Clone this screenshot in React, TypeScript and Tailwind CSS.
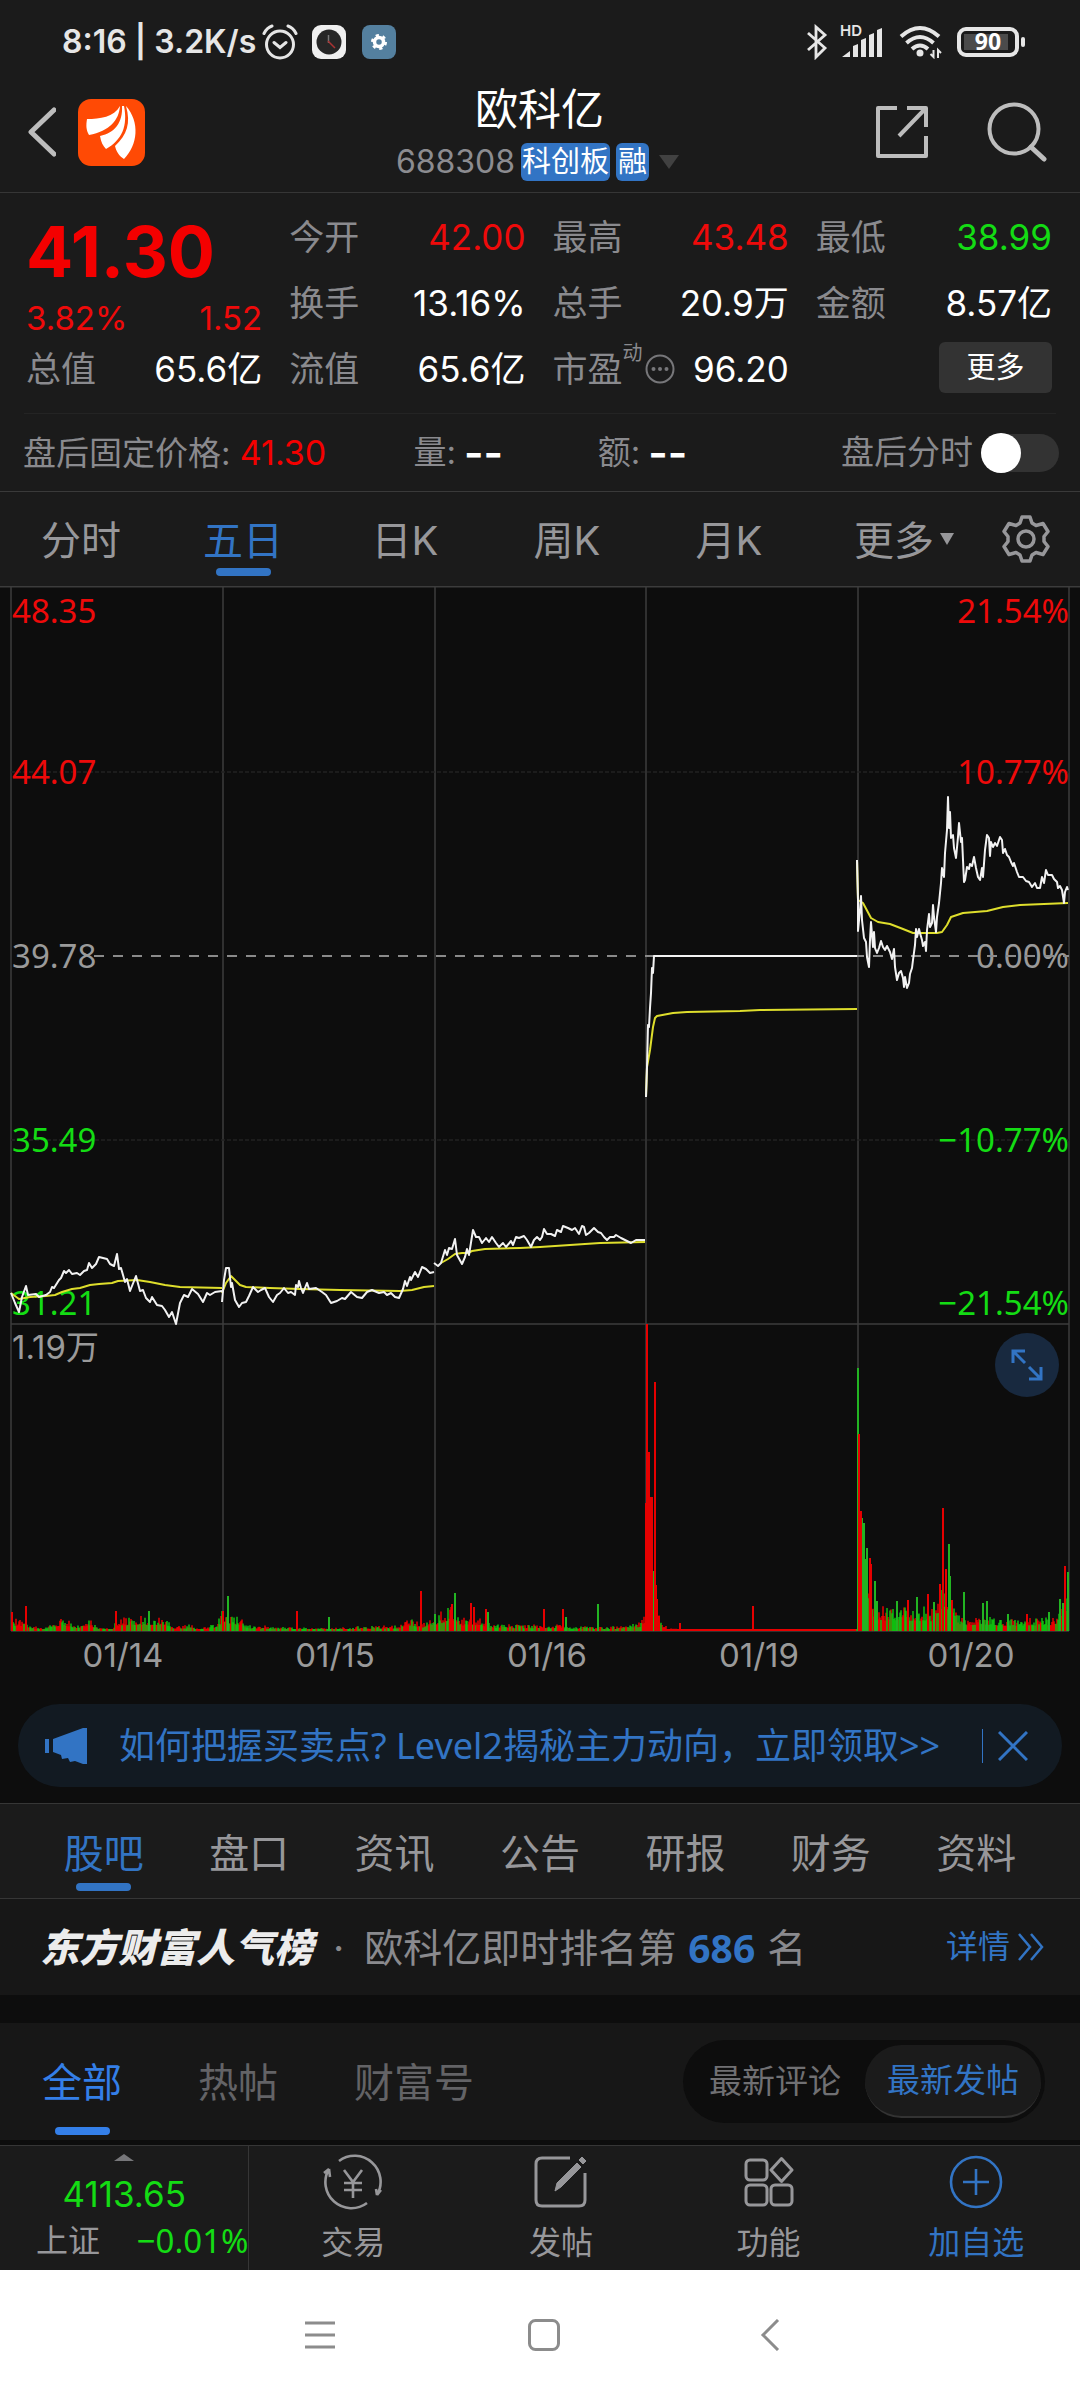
import React, { useState } from 'react';

type Point = [number, number];

interface QuoteCell {
  label: string;
  value: string;
  color?: string;
}

interface VolumeSpike {
  x: number;
  h: number;
  up: boolean;
}

const openColumn: QuoteCell[] = [
  { label: '今开', value: '42.00', color: 'text-[#ee0a0a]' },
  { label: '换手', value: '13.16%' },
  { label: '流值', value: '65.6亿' },
];

const periodTabs = ['分时', '五日', '日K', '周K', '月K'];
const infoTabs = ['股吧', '盘口', '资讯', '公告', '研报', '财务', '资料'];
const postTabs = ['全部', '热帖', '财富号'];

/* ---------- chart data ---------- */

const PRICE_LINES = [
  '11,707 15,717 19,726 22,711 26,700 28,709 36,708 39,711 46,709 50,706 52,701 54,702 59,694 61,692 64,685 66,687 69,684 72,688 77,687 80,689 84,685 87,684 89,677 92,682 96,678 99,671 103,672 107,673 110,678 114,680 117,668 119,683 121,682 125,696 127,693 130,705 136,690 140,705 143,704 146,712 150,716 152,711 157,719 162,720 165,724 169,731 172,726 176,738 180,717 184,709 188,711 192,703 198,708 203,716 207,707 210,709 215,706 222,705',
  '222,716 224,694 226,682 229,682 231,701 232,697 235,714 239,721 242,717 246,716 249,710 253,701 258,706 261,704 265,702 269,711 273,716 277,709 280,707 284,702 288,707 291,706 295,709 296,699 298,701 299,695 301,702 303,707 307,697 309,703 316,702 322,706 326,709 331,717 337,715 342,712 345,713 351,706 357,711 362,712 367,706 372,704 379,707 384,706 387,709 391,707 395,711 399,712 403,703 405,695 407,700 410,691 411,694 415,686 418,691 422,681 426,683 430,687 434,686',
  '434,677 438,680 441,677 445,664 447,669 449,662 452,663 455,653 457,669 462,678 465,671 467,663 469,669 473,644 476,651 479,651 482,657 486,652 489,656 492,651 496,657 499,661 503,657 506,661 511,655 513,659 516,651 519,652 524,650 527,654 531,661 534,654 537,651 540,654 542,651 544,643 547,648 551,648 555,650 557,644 561,646 563,640 568,642 572,644 575,642 579,648 582,640 584,641 586,649 589,647 594,642 598,646 601,647 604,651 607,654 610,651 614,651 616,649 621,652 625,654 631,657 636,654 645,654',
  '646,511 647,481 648,439 649,441 650,422 651,407 652,382 653,387 654,370 857,370',
  '857,274 858,314 858,345 860,324 861,310 862,334 864,352 866,356 867,371 869,381 870,354 871,336 873,361 874,346 875,362 877,367 879,362 881,355 883,361 885,364 887,360 890,366 892,373 894,363 895,381 897,394 899,387 901,385 903,392 904,401 905,391 907,402 909,397 910,388 912,382 913,374 915,359 916,343 917,351 919,343 920,347 922,354 923,360 925,356 926,365 927,344 929,328 930,341 932,337 933,319 934,331 936,346 937,331 939,317 940,307 941,297 942,282 944,291 945,267 947,244 948,211 949,242 950,226 951,252 953,249 954,262 956,272 958,251 959,237 961,256 962,252 964,296 965,294 967,281 969,283 970,278 972,280 974,271 976,282 978,291 980,294 982,282 983,291 985,264 987,249 989,252 990,270 991,256 993,261 995,257 997,260 1000,251 1002,254 1003,267 1005,263 1007,269 1009,271 1011,276 1013,280 1014,277 1017,286 1019,291 1023,291 1026,295 1029,296 1032,301 1035,297 1037,302 1040,302 1042,291 1044,297 1046,284 1048,289 1052,289 1054,293 1057,296 1058,302 1060,300 1062,304 1064,317 1065,306 1067,301 1068,304',
];

const AVERAGE_LINES = [
  '11,707 19,713 30,711 46,710 55,709 62,706 72,703 80,702 90,699 99,698 112,697 118,695 137,694 150,696 165,699 180,701 222,702',
  '222,707 226,697 231,690 235,694 240,699 246,701 270,702 300,703 340,704 400,705 412,704 424,701 434,700',
  '441,677 448,673 455,668 462,667 468,667 472,665 485,663 520,662 540,661 555,660 570,659 600,657 645,656',
  '646,511 647,481 650,464 653,441 655,432 657,430 673,427 687,426 740,425 760,424 857,423',
  '857,274 858,314 863,317 871,332 878,336 890,338 903,343 913,347 937,347 942,346 947,339 951,331 963,327 987,325 1003,321 1020,319 1068,317',
];

// Upper bound of the ordinary bars along the x axis
const VOLUME_PROFILE: Point[] = [
  [11, 14], [24, 10], [32, 6], [44, 2], [50, 10], [65, 13], [76, 7], [90, 13], [98, 4], [113, 2],
  [116, 12], [130, 15], [150, 15], [167, 14], [173, 5], [190, 7], [200, 2], [215, 8], [222, 20],
  [238, 16], [248, 6], [280, 5], [320, 3], [360, 5], [400, 6], [410, 14], [424, 8], [436, 16],
  [450, 26], [462, 14], [480, 14], [492, 7], [560, 7], [570, 5], [620, 5], [640, 10], [646, 20],
  [655, 30], [662, 9], [668, 4], [690, 2], [857, 2], [859, 110], [864, 70], [871, 45], [877, 26],
  [900, 26], [935, 24], [941, 50], [949, 50], [955, 20], [965, 14], [985, 16], [1000, 12],
  [1030, 14], [1054, 14], [1062, 26], [1069, 50],
];

const VOLUME_SPIKES: VolumeSpike[] = [
  { x: 12, h: 19, up: true }, { x: 26, h: 25, up: true }, { x: 116, h: 20, up: true },
  { x: 149, h: 20, up: false }, { x: 223, h: 20, up: true }, { x: 228, h: 35, up: false },
  { x: 297, h: 20, up: true }, { x: 329, h: 14, up: false }, { x: 421, h: 40, up: true },
  { x: 435, h: 17, up: false }, { x: 452, h: 27, up: true }, { x: 455, h: 38, up: false },
  { x: 471, h: 28, up: true }, { x: 474, h: 24, up: true }, { x: 486, h: 22, up: true },
  { x: 488, h: 19, up: false }, { x: 544, h: 22, up: true }, { x: 563, h: 22, up: true },
  { x: 566, h: 14, up: false }, { x: 598, h: 27, up: false }, { x: 646, h: 128, up: true },
  { x: 647, h: 307, up: true }, { x: 649, h: 179, up: true }, { x: 650, h: 134, up: true },
  { x: 652, h: 134, up: true }, { x: 653, h: 60, up: false }, { x: 655, h: 249, up: true },
  { x: 656, h: 46, up: true }, { x: 657, h: 32, up: true }, { x: 659, h: 15, up: true },
  { x: 680, h: 8, up: true }, { x: 753, h: 25, up: true }, { x: 858, h: 263, up: false },
  { x: 859, h: 197, up: true }, { x: 861, h: 120, up: true }, { x: 862, h: 113, up: false },
  { x: 864, h: 108, up: false }, { x: 865, h: 72, up: false }, { x: 867, h: 83, up: false },
  { x: 870, h: 73, up: true }, { x: 871, h: 67, up: true }, { x: 875, h: 50, up: false },
  { x: 877, h: 30, up: false }, { x: 897, h: 30, up: false }, { x: 908, h: 31, up: true },
  { x: 917, h: 34, up: false }, { x: 928, h: 37, up: true }, { x: 934, h: 29, up: false },
  { x: 940, h: 47, up: true }, { x: 943, h: 123, up: true }, { x: 946, h: 62, up: true },
  { x: 949, h: 87, up: false }, { x: 950, h: 55, up: false }, { x: 952, h: 31, up: true },
  { x: 964, h: 39, up: false }, { x: 983, h: 28, up: false }, { x: 987, h: 30, up: false },
  { x: 1008, h: 17, up: false }, { x: 1027, h: 17, up: true }, { x: 1049, h: 19, up: false },
  { x: 1060, h: 32, up: false }, { x: 1063, h: 28, up: false }, { x: 1065, h: 65, up: true },
  { x: 1068, h: 59, up: false },
];

const GRID_X = [11, 223, 435, 646, 858, 1069];
const BASE_Y = 1045;
const DATES = ['01/14', '01/15', '01/16', '01/19', '01/20'];

const profileAt = (x: number) => {
  for (let i = 1; i < VOLUME_PROFILE.length; i++) {
    const [x0, h0] = VOLUME_PROFILE[i - 1];
    const [x1, h1] = VOLUME_PROFILE[i];
    if (x <= x1) {
      return h0 + ((h1 - h0) * (x - x0)) / (x1 - x0);
    }
  }
  return 2;
};

// Repeatable noise so that the bars don't jump on re-render
const noise = (n: number) => {
  const s = Math.sin(n * 127.1 + 11.7) * 43758.5453;
  return s - Math.floor(s);
};

const volumePath = (up: boolean) => {
  let d = '';
  for (let i = 0; i < 1057; i++) {
    const x = 12 + i;
    const quiet = x > 662 && x < 857;
    const isUp = quiet || noise(i + 500) > 0.48;
    if (isUp !== up) continue;
    const r = noise(i);
    const h = Math.max(2, profileAt(x) * (0.4 + 0.6 * r * r));
    d += `M${x} ${BASE_Y}v${-h.toFixed(1)}`;
  }
  return d;
};

const spikePath = (up: boolean) =>
  VOLUME_SPIKES.filter(s => s.up === up).map(s => `M${s.x} ${BASE_Y}v${-s.h}`).join('');

/* ---------- sections ---------- */

const StatusBar = () => (
  <div className="flex h-[84px] items-center justify-between pl-[62px] pr-[54px] text-[#e6e6e6]">
    <div className="flex items-center">
      <span className="whitespace-nowrap text-[32px] font-semibold">8:16 | 3.2K/s</span>
      <svg className="ml-[6px] h-9 w-9" viewBox="0 0 36 36" fill="none" stroke="currentColor" strokeWidth="3">
        <circle cx="18" cy="20.500" r="13.500" />
        <path d="M12 18.500l6 5 6-5M2 9.500q3-6 8-7.500M34 9.500q-3-6-8-7.500" strokeLinecap="round" />
      </svg>
      <svg className="ml-[14px] h-[34px] w-[34px]" viewBox="0 0 34 34">
        <rect width="34" height="34" rx="9" fill="#efefef" />
        <circle cx="17" cy="17" r="12.500" fill="#262626" />
        <path d="M16.500 10v8" stroke="#777" strokeWidth="1.500" />
        <path d="M16 16l7 7" stroke="#a33" strokeWidth="1.500" />
      </svg>
      <svg className="ml-4 h-[34px] w-[34px]" viewBox="0 0 34 34">
        <rect width="34" height="34" rx="8" fill="#54809f" />
        <circle cx="17" cy="17" r="4.500" fill="none" stroke="#fff" strokeWidth="3.500" />
        <circle cx="17" cy="17" r="6.700" fill="none" stroke="#fff" strokeWidth="2.600" strokeDasharray="3.200 3.814" />
      </svg>
    </div>
    <div className="flex items-center">
      <svg className="h-9 w-[22px]" viewBox="0 0 22 36" fill="none" stroke="currentColor" strokeWidth="2.800">
        <path d="M2 9l17 15-9 9V3l9 8L2 26" />
      </svg>
      <svg className="ml-3 h-10 w-[43px]" viewBox="0 -4 43 40" fill="currentColor">
        <text x="0" y="10" fontSize="15" fontWeight="600">HD</text>
        <path d="M2 31l8-6v6zM13 20l5-2v13h-5zM21 14l5-2v19h-5zM29 9l5-2v24h-5zM37 4l5-2v29h-5z" />
      </svg>
      <svg className="ml-4 h-[34px] w-[44px]" viewBox="0 0 44 34" fill="none" stroke="currentColor" strokeWidth="4">
        <path d="M2 11.500q19-17 38 0M7.500 18q13.500-12 27 0M13 24q8-7 16 0" />
        <circle cx="21" cy="28" r="3.500" fill="currentColor" stroke="none" />
        <path d="M34.500 25v7l-3-3M39 33v-8l3 3" strokeWidth="2" />
      </svg>
      <svg className="ml-[14px] h-[30px] w-[69px] font-['Noto_Sans',sans-serif]" viewBox="0 0 69 30">
        <rect x="2" y="2" width="58" height="26" rx="7" fill="none" stroke="currentColor" strokeWidth="4" />
        <rect x="7" y="7" width="44" height="16" fill="#4b4b4b" />
        <rect x="64" y="10" width="4" height="10" rx="2" fill="currentColor" />
        <text x="31" y="23" fontSize="23" fontWeight="700" textAnchor="middle" fill="#fff">90</text>
      </svg>
    </div>
  </div>
);

const TitleBar = () => (
  <div className="flex h-24 items-center px-7">
    <div className="flex flex-1 items-center gap-[22px]">
      <button type="button" aria-label="返回">
        <svg className="h-[50px] w-7" viewBox="0 0 28 50" fill="none" stroke="#bdbdbd" strokeWidth="5">
          <path d="M26 3L3 25l23 22" strokeLinecap="round" strokeLinejoin="round" />
        </svg>
      </button>
      <svg className="h-[67px] w-[67px]" viewBox="0 0 67 67">
        <rect width="67" height="67" rx="13" fill="#ff4a05" />
        <g fill="#fff">
          <path d="M9 20C22 20 36 18 42 7C41 21 32 32 11 36C8 31 8 26 9 20z" />
          <path d="M44 7C45 23 37 34 22 37C23 43 25 47 28 50C44 41 50 27 46 7z" />
          <path d="M48 7C53 24 49 36 37 47C38 52 41 57 46 60C60 46 62 23 48 7z" />
        </g>
      </svg>
    </div>
    <div className="flex flex-col items-center">
      <h1 className="h-[50px] pl-1 text-[43px] leading-[50px] text-white">欧科亿</h1>
      <button type="button" className="mt-[9px] flex h-[38px] items-center">
        <span className="mr-[6px] text-[32px] text-[#8c8c90]">688308</span>
        <span className="mr-[6px] rounded-md bg-[#3274c4] px-px text-[29px] leading-[38px] text-white">科创板</span>
        <span className="rounded-md bg-[#3274c4] px-[2px] text-[29px] leading-[38px] text-white">融</span>
        <svg className="ml-[10px] h-[14px] w-5" viewBox="0 0 20 14" fill="#414141"><path d="M0 0h20L10 14z" /></svg>
      </button>
    </div>
    <div className="flex flex-1 items-center justify-end gap-[58px] pr-[5px]">
      <button type="button" aria-label="分享">
        <svg className="h-[54px] w-[54px]" viewBox="0 0 54 54" fill="none" stroke="#bdbdbd" strokeWidth="4">
          <path d="M22 3H3v48h48V31M32 3h19v19M50 4L24 31" strokeLinejoin="round" />
        </svg>
      </button>
      <button type="button" aria-label="搜索">
        <svg className="h-[60px] w-[60px]" viewBox="0 0 60 60" fill="none" stroke="#bdbdbd" strokeWidth="4">
          <circle cx="27" cy="27" r="24.500" />
          <path d="M44 45l13 12" strokeWidth="5" strokeLinecap="round" />
        </svg>
      </button>
    </div>
  </div>
);

const Cell = ({ label, value, color = 'text-white' }: QuoteCell) => (
  <div className="flex h-[66px] items-center justify-between whitespace-nowrap">
    <dt className="text-[35px] text-[#8a8a8e]">{label}</dt>
    <dd className={`text-[35px] ${color}`}>{value}</dd>
  </div>
);

const QuotePanel = () => (
  <dl className="grid grid-cols-4 gap-x-[27px] py-[11px] pl-[26px] pr-[28px]">
    <div>
      <div className="flex h-24 items-center text-[70px] font-bold text-[#f40000]">41.30</div>
      <div className="flex h-9 items-center justify-between text-[33px] text-[#ee0a0a]">
        <span>3.82%</span>
        <span>1.52</span>
      </div>
      <Cell label="总值" value="65.6亿" />
    </div>
    <div>
      {openColumn.map(cell => <Cell key={cell.label} {...cell} />)}
    </div>
    <div>
      <Cell label="最高" value="43.48" color="text-[#ee0a0a]" />
      <Cell label="总手" value="20.9万" />
      <div className="flex h-[66px] items-center justify-between whitespace-nowrap text-[35px]">
        <dt className="flex items-center text-[#8a8a8e]">
          市盈
          <span className="mb-8 text-[20px] leading-[20px]">动</span>
          <svg className="ml-[2px] h-[30px] w-[30px]" viewBox="0 0 30 30" fill="#77777a">
            <circle cx="15" cy="15" r="13.500" fill="none" stroke="#77777a" strokeWidth="2" />
            <circle cx="8.500" cy="15" r="2" /><circle cx="15" cy="15" r="2" /><circle cx="21.500" cy="15" r="2" />
          </svg>
        </dt>
        <dd className="text-white">96.20</dd>
      </div>
    </div>
    <div>
      <Cell label="最低" value="38.99" color="text-[#14dc14]" />
      <Cell label="金额" value="8.57亿" />
      <div className="flex h-[66px] items-center justify-end">
        <button type="button" className="mb-1 h-[51px] w-[113px] rounded-md bg-[#333333] text-[29px] text-white">更多</button>
      </div>
    </div>
  </dl>
);

const AfterHours = () => {
  const [enabled, setEnabled] = useState(false);

  return (
    <div className="border-b border-[#3a3a3a]">
      <div className="mx-6 border-t border-[#242424]" />
      <div className="grid h-[77px] grid-cols-[390fr_184fr_243fr_217fr] items-center whitespace-nowrap pl-[23px] pr-[21px] text-[33px] text-[#8a8a8e]">
        <div>盘后固定价格: <span className="text-[34px] text-[#f40000]">41.30</span></div>
        <div className="flex items-center gap-2">量: <span className="text-[42px] font-semibold text-white">--</span></div>
        <div className="flex items-center gap-2">额: <span className="text-[42px] font-semibold text-white">--</span></div>
        <label className="flex items-center justify-end gap-2">
          盘后分时
          <input
            type="checkbox"
            role="switch"
            checked={enabled}
            onChange={e => setEnabled(e.target.checked)}
            className="flex h-[38px] w-[78px] appearance-none items-center rounded-full bg-[#333333] before:h-10 before:w-10 before:shrink-0 before:rounded-full before:bg-white checked:justify-end checked:bg-[#3274c4]"
          />
        </label>
      </div>
    </div>
  );
};

const PeriodTabs = () => {
  const [active, setActive] = useState('五日');

  return (
    <nav className="grid h-[94px] grid-cols-[repeat(6,3fr)_2fr] text-[40px] text-[#97979a]">
      {periodTabs.map(tab => (
        <button
          key={tab}
          type="button"
          onClick={() => setActive(tab)}
          className={`flex flex-col items-center pt-[21px] ${active === tab ? 'text-[#3274c4]' : ''}`}
        >
          <span className="leading-[55px]">{tab}</span>
          {active === tab && <span className="h-2 w-[55px] rounded-full bg-[#3274c4]" />}
        </button>
      ))}
      <button type="button" className="flex items-start justify-end gap-[6px] pr-[18px] pt-[21px]">
        <span className="leading-[55px]">更多</span>
        <svg className="mt-5 h-3 w-[14px]" viewBox="0 0 14 12" fill="#97979a"><path d="M0 0h14L7 12z" /></svg>
      </button>
      <button type="button" aria-label="设置" className="flex items-center justify-center">
        <svg className="h-12 w-12" viewBox="0 0 48 48" fill="none" stroke="#97979a" strokeWidth="3.500" strokeLinejoin="round">
          <path d="M20 2h8l2 6 4 2.500 7-2 5 8-4 5v5l4 5-5 8-7-2-4 2.500-2 6h-8l-2-6-4-2.500-7 2-5-8 4-5v-5l-4-5 5-8 7 2 4-2.500z" />
          <circle cx="24" cy="24" r="8" />
        </svg>
      </button>
    </nav>
  );
};

const FiveDayChart = () => (
  <div className="relative">
    <svg
      className="block h-auto w-full font-['Noto_Sans','Noto_Sans_CJK_SC',sans-serif]"
      viewBox="0 0 1080 1096"
      fontSize="33"
    >
      {/* Grid */}
      <g stroke="#3c3c3c" strokeWidth="1.500">
        <path d="M0 .75h1080M11 738h1058M11 1045h1058" />
        {GRID_X.map(x => <path key={x} d={`M${x} 0V1045`} />)}
      </g>
      <path d="M11 186h1058M11 554h1058" stroke="#222" strokeWidth="1.500" strokeDasharray="4 2" />

      {/* Scales */}
      <g fill="#ee0a0a">
        <text x="12" y="37">48.35</text>
        <text x="12" y="198">44.07</text>
        <text x="1069" y="37" textAnchor="end">21.54%</text>
        <text x="1069" y="198" textAnchor="end">10.77%</text>
      </g>
      <g fill="#14dc14">
        <text x="12" y="566">35.49</text>
        <text x="12" y="729">31.21</text>
        <text x="1069" y="566" textAnchor="end">−10.77%</text>
        <text x="1069" y="729" textAnchor="end">−21.54%</text>
      </g>
      <g fill="#9a9a9a">
        <text x="12" y="382">39.78</text>
        <text x="1069" y="382" textAnchor="end">0.00%</text>
      </g>
      <g className="font-['Inter','Noto_Sans_CJK_SC',sans-serif]" fill="#9a9a9a">
        <text x="12" y="773">1.19万</text>
        {DATES.map((date, i) => (
          <text key={date} x={123 + i * 212} y="1081" textAnchor="middle">{date}</text>
        ))}
      </g>

      <path d="M94 370H1069" stroke="#8a8a8a" strokeWidth="2" strokeDasharray="10 9" />

      {/* Volume */}
      <g strokeWidth="1.500" fill="none">
        <path d={volumePath(true)} stroke="#e60000" />
        <path d={volumePath(false)} stroke="#10d010" strokeOpacity=".9" />
        <path d={spikePath(false)} stroke="#22b422" strokeWidth="2" />
        <path d={spikePath(true)} stroke="#e60000" strokeWidth="2" />
      </g>

      {/* Average and price */}
      <g fill="none" strokeWidth="2" strokeLinejoin="round">
        {AVERAGE_LINES.map((points, i) => <polyline key={i} points={points} stroke="#dede2c" />)}
        {PRICE_LINES.map((points, i) => <polyline key={i} points={points} stroke="#f2f2f2" />)}
      </g>
    </svg>
    <button
      type="button"
      aria-label="全屏"
      className="absolute right-[21px] top-[68.200%] flex h-16 w-16 items-center justify-center rounded-full bg-[#18293f]"
    >
      <svg className="h-8 w-8" viewBox="0 0 32 32" fill="none" stroke="#3274c4" strokeWidth="3">
        <path d="M14 2H2v12M2 2l12 12M30 18v12H18M30 30L18 18" />
      </svg>
    </button>
  </div>
);

const PromoBar = () => (
  <div className="mx-[18px] mb-4 mt-[22px] flex h-[83px] items-center rounded-full bg-[#121a22] pl-[27px] pr-[34px] text-[#3274c4]">
    <svg className="h-9 w-[42px] shrink-0" viewBox="0 0 42 36" fill="#3274c4">
      <path d="M0 11h4v14H0zM8 11L38 0h4v36h-4l-8-3-5 1-2-4-6 1-1-4-8-3z" />
    </svg>
    <a href="#level2" className="ml-8 flex-1 whitespace-nowrap font-['Noto_Sans','Noto_Sans_CJK_SC',sans-serif] text-[36px]">
      如何把握买卖点? Level2揭秘主力动向，立即领取&gt;&gt;
    </a>
    <span className="mr-[15px] h-[34px] w-px bg-[#3274c4]" />
    <button type="button" aria-label="关闭">
      <svg className="h-[30px] w-[30px]" viewBox="0 0 30 30" stroke="#3274c4" strokeWidth="3">
        <path d="M1 1l28 28M29 1L1 29" />
      </svg>
    </button>
  </div>
);

const InfoTabs = () => {
  const [active, setActive] = useState('股吧');

  return (
    <nav className="flex h-24 border-y border-[#363636] bg-[#1b1b1b] px-[31px] text-[40px] text-[#97979a]">
      {infoTabs.map(tab => (
        <button
          key={tab}
          type="button"
          onClick={() => setActive(tab)}
          className={`flex flex-1 flex-col items-center pt-[21px] ${active === tab ? 'text-[#3274c4]' : ''}`}
        >
          <span className="leading-[58px]">{tab}</span>
          {active === tab && <span className="h-2 w-[55px] rounded-full bg-[#3274c4]" />}
        </button>
      ))}
    </nav>
  );
};

const RankRow = () => (
  <div className="flex h-24 items-center justify-between whitespace-nowrap bg-[#171717] pl-10 pr-9">
    <div className="flex items-center text-[39px] text-[#8a8a8e]">
      <strong className="font-black italic text-[#ececec]">东方财富人气榜</strong>
      <span className="mx-5">·</span>
      欧科亿即时排名第
      <b className="mx-3 font-['Noto_Sans',sans-serif] text-[#3274c4]">686</b>
      名
    </div>
    <a href="#rank" className="flex items-center gap-2 text-[32px] text-[#3274c4]">
      详情
      <svg className="h-7 w-[26px]" viewBox="0 0 26 28" fill="none" stroke="#3274c4" strokeWidth="2.500">
        <path d="M1 1l11 13L1 27M13 1l11 13-11 13" />
      </svg>
    </a>
  </div>
);

const PostFilter = () => {
  const [active, setActive] = useState('全部');
  const [sort, setSort] = useState('最新发帖');

  return (
    <div className="mt-7 flex h-[117px] items-center justify-between bg-[#171717] pl-[42px] pr-[35px]">
      <div className="flex gap-[76px] self-end whitespace-nowrap pb-[5px] text-[40px] text-[#636366]">
        {postTabs.map(tab => (
          <button
            key={tab}
            type="button"
            onClick={() => setActive(tab)}
            className={`flex h-[82px] flex-col items-center justify-between ${active === tab ? 'text-[#347fe8]' : ''}`}
          >
            <span className="leading-[60px]">{tab}</span>
            {active === tab && <span className="h-2 w-[55px] rounded-full bg-[#347fe8]" />}
          </button>
        ))}
      </div>
      <div className="flex h-[83px] items-center rounded-full bg-[#0d0d0d] pl-[26px] pr-1 text-[33px] text-[#707073]">
        {['最新评论', '最新发帖'].map(name => (
          <button
            key={name}
            type="button"
            onClick={() => setSort(name)}
            className={sort === name ? 'ml-6 h-[73px] rounded-full border-b-2 border-[#333] bg-[#1b1b1b] px-[22px] text-[#3274c4]' : ''}
          >
            {name}
          </button>
        ))}
      </div>
    </div>
  );
};

const BottomBar = () => (
  <footer className="mt-[5px] flex h-[125px] border-t border-[#363636] bg-[#1b1b1b] text-[32px] text-[#97979a]">
    <button type="button" className="flex w-[23.100%] flex-col items-center border-r border-[#363636] pt-2">
      <svg className="h-[7px] w-5" viewBox="0 0 20 7" fill="#77777a"><path d="M0 7h20L10 0z" /></svg>
      <span className="mt-2 text-[35px] leading-[50px] text-[#14dc14]">4113.65</span>
      <span className="flex w-full justify-between whitespace-nowrap pl-9 leading-[44px]">
        上证 <span className="font-['Noto_Sans',sans-serif] text-[33px] text-[#14dc14]">−0.01%</span>
      </span>
    </button>
    <button type="button" className="flex flex-1 flex-col items-center pt-2">
      <svg className="h-14 w-[60px]" viewBox="0 0 60 56" fill="none" stroke="#97979a" strokeWidth="2.600">
        <path d="M16 7a26 26 0 0 1 38 34l4-5M54 41l-1-6M44 49A26 26 0 0 1 6 15l-5 4M6 15l1 8" />
        <path d="M21 16l9 12 9-12M30 28v16M21 29h18M21 36h18" />
      </svg>
      <span className="mt-2 leading-[50px]">交易</span>
    </button>
    <button type="button" className="flex flex-1 flex-col items-center pt-2">
      <svg className="h-14 w-[54px]" viewBox="0 0 54 56" fill="none" stroke="#97979a" strokeWidth="3">
        <path d="M36 4H8q-6 0-6 6v36q0 6 6 6h37q6 0 6-6V19" />
        <path d="M21 37l2-8L43 9l4 4-20 20zM45 6l3-3 4 4-3 3z" fill="#97979a" strokeWidth="1" />
      </svg>
      <span className="mt-2 leading-[50px]">发帖</span>
    </button>
    <button type="button" className="flex flex-1 flex-col items-center pt-2">
      <svg className="h-14 w-[50px]" viewBox="0 0 50 56" fill="none" stroke="#97979a" strokeWidth="3">
        <rect x="2" y="6" width="21" height="20" rx="4" />
        <rect x="2" y="31" width="21" height="20" rx="4" />
        <rect x="27" y="31" width="21" height="20" rx="4" />
        <path d="M37.500 4.500l10.500 11.500-10.500 11.500-10.500-11.500z" strokeLinejoin="round" />
      </svg>
      <span className="mt-2 leading-[50px]">功能</span>
    </button>
    <button type="button" className="flex flex-1 flex-col items-center pt-2 text-[#3274c4]">
      <svg className="h-14 w-14" viewBox="0 0 56 56" fill="none" stroke="#3274c4" strokeWidth="2.600">
        <circle cx="28" cy="28" r="25" />
        <path d="M28 15v26M15 28h26" />
      </svg>
      <span className="mt-2 leading-[50px]">加自选</span>
    </button>
  </footer>
);

const SystemNav = () => (
  <div className="flex h-[130px] items-center justify-center gap-48 bg-white pl-2">
    <button type="button" aria-label="最近任务">
      <svg className="h-8 w-8" viewBox="0 0 32 32" stroke="#8c8c8c" strokeWidth="3"><path d="M1 4h30M1 16h30M1 28h30" /></svg>
    </button>
    <button type="button" aria-label="主页">
      <svg className="h-8 w-8" viewBox="0 0 32 32" fill="none" stroke="#8c8c8c" strokeWidth="3">
        <rect x="1.500" y="1.500" width="29" height="29" rx="6" />
      </svg>
    </button>
    <button type="button" aria-label="后退">
      <svg className="h-8 w-8" viewBox="0 0 32 32" fill="none" stroke="#8c8c8c" strokeWidth="3"><path d="M26 1L11 16l15 15" /></svg>
    </button>
  </div>
);

export default function App() {
  return (
    <div className="min-h-screen w-full bg-[#0d0d0d] font-['Inter','Noto_Sans_CJK_SC',sans-serif] leading-none">
      <header className="border-b border-[#363636] bg-[#1b1b1b] pb-3">
        <StatusBar />
        <TitleBar />
      </header>
      <section className="bg-[#1b1b1b]">
        <QuotePanel />
        <AfterHours />
        <PeriodTabs />
      </section>
      <FiveDayChart />
      <PromoBar />
      <InfoTabs />
      <RankRow />
      <PostFilter />
      <BottomBar />
      <SystemNav />
    </div>
  );
}
